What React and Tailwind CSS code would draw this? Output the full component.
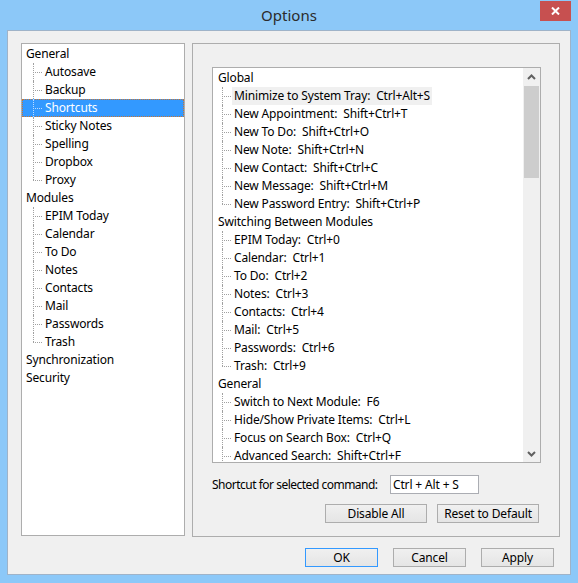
import React from "react";

const tree = [
  { label: "General", children: ["Autosave", "Backup", "Shortcuts", "Sticky Notes", "Spelling", "Dropbox", "Proxy"] },
  { label: "Modules", children: ["EPIM Today", "Calendar", "To Do", "Notes", "Contacts", "Mail", "Passwords", "Trash"] },
  { label: "Synchronization", children: [] },
  { label: "Security", children: [] },
];

const groups = [
  {
    label: "Global",
    items: [
      ["Minimize to System Tray", "Ctrl+Alt+S"],
      ["New Appointment", "Shift+Ctrl+T"],
      ["New To Do", "Shift+Ctrl+O"],
      ["New Note", "Shift+Ctrl+N"],
      ["New Contact", "Shift+Ctrl+C"],
      ["New Message", "Shift+Ctrl+M"],
      ["New Password Entry", "Shift+Ctrl+P"],
    ],
  },
  {
    label: "Switching Between Modules",
    items: [
      ["EPIM Today", "Ctrl+0"],
      ["Calendar", "Ctrl+1"],
      ["To Do", "Ctrl+2"],
      ["Notes", "Ctrl+3"],
      ["Contacts", "Ctrl+4"],
      ["Mail", "Ctrl+5"],
      ["Passwords", "Ctrl+6"],
      ["Trash", "Ctrl+9"],
    ],
  },
  {
    label: "General",
    items: [
      ["Switch to Next Module", "F6"],
      ["Hide/Show Private Items", "Ctrl+L"],
      ["Focus on Search Box", "Ctrl+Q"],
      ["Advanced Search", "Shift+Ctrl+F"],
    ],
    open: true,
  },
];

function Conn({ last, w, light }) {
  const c = light ? "border-[#bcdcff]" : "border-[#a0a0a0]";
  return (
    <div className={`relative shrink-0 h-full ${w}`}>
      <span className={`absolute left-0 top-0 border-l border-dotted ${c} ${last ? "h-[9px]" : "h-full"}`} />
      <span className={`absolute left-0 top-[9px] w-full border-t border-dotted ${c}`} />
    </div>
  );
}

function Btn({ children, w, def }) {
  return (
    <div
      className={`${w} h-[19px] flex items-center justify-center border ${
        def ? "border-[#3399ff]" : "border-[#adadad]"
      } bg-gradient-to-b from-[#f0f0f0] to-[#e5e5e5] leading-none`}
    >
      {children}
    </div>
  );
}

function Chevron({ down }) {
  return (
    <svg width="9" height="6" viewBox="0 0 9 6">
      <polyline
        points={down ? "1,1 4.5,4.5 8,1" : "1,5 4.5,1.5 8,5"}
        fill="none"
        stroke="#606060"
        strokeWidth="2"
      />
    </svg>
  );
}

export default function App() {
  return (
    <div className="w-[578px] h-[583px] bg-[#8cc8f8] flex flex-col font-['Noto_Sans',sans-serif] text-[12px] tracking-[-0.15px] text-black">
      <div className="h-[30px] relative flex items-center justify-center shrink-0">
        <span className="text-[15px] tracking-normal text-[#2b2b2b] leading-none">Options</span>
        <div className="absolute right-[7px] top-[1px] w-[31px] h-[20px] bg-[#c75050] flex items-center justify-center">
          <svg width="9" height="8" viewBox="0 0 9 8">
            <path d="M1 0.5 L8 7.5 M8 0.5 L1 7.5" stroke="white" strokeWidth="2" />
          </svg>
        </div>
      </div>

      <div className="mx-[7px] mb-[8px] flex-1 border border-[#9fb3c8] bg-[#f0f0f0] flex flex-col">
        <div className="flex pt-[12px] pl-[13px] gap-[7px]">
          {/* Tree */}
          <div className="w-[164px] h-[493px] border border-[#adadad] bg-white pt-[1px] flex flex-col">
            {tree.map((g) => (
              <React.Fragment key={g.label}>
                <div className="h-[18px] leading-[18px] pl-[4px] whitespace-nowrap">{g.label}</div>
                {g.children.map((c, i) => {
                  const sel = c === "Shortcuts";
                  return (
                    <div
                      key={c}
                      className={`h-[18px] flex items-stretch pl-[11px] ${
                        sel
                          ? "bg-[#3399ff] text-white outline outline-1 outline-dotted outline-[#c87533] -outline-offset-1"
                          : ""
                      }`}
                    >
                      <Conn w="w-[9px]" last={i === g.children.length - 1} light={sel} />
                      <span className="ml-[3px] leading-[18px] whitespace-nowrap">{c}</span>
                    </div>
                  );
                })}
              </React.Fragment>
            ))}
          </div>

          {/* Right panel */}
          <div className="w-[368px] h-[494px] border border-[#adadad] flex flex-col pt-[23px] pl-[19px]">
            <div className="w-[329px] h-[396px] border border-[#adadad] bg-white flex">
              <div className="flex-1 overflow-hidden flex flex-col pt-[1px]">
                {groups.map((g) => (
                  <React.Fragment key={g.label}>
                    <div className="h-[18px] shrink-0 leading-[18px] pl-[5px] whitespace-nowrap">{g.label}</div>
                    {g.items.map(([a, b], i) => {
                      const hl = i === 0 && g.label === "Global";
                      return (
                        <div key={a} className="h-[18px] shrink-0 flex items-stretch pl-[9px]">
                          <Conn w="w-[9px]" last={!g.open && i === g.items.length - 1} />
                          <span
                            className={`ml-[1px] px-[2px] leading-[18px] whitespace-pre ${hl ? "bg-[#f0f0f0]" : ""}`}
                          >
                            {`${a}:  ${b}`}
                          </span>
                        </div>
                      );
                    })}
                  </React.Fragment>
                ))}
              </div>
              <div className="w-[17px] shrink-0 bg-[#f0f0f0] flex flex-col">
                <div className="h-[17px] flex items-center justify-center">
                  <Chevron />
                </div>
                <div className="mt-[1px] mx-[1px] h-[92px] bg-[#cdcdcd]" />
                <div className="flex-1" />
                <div className="h-[17px] flex items-center justify-center">
                  <Chevron down />
                </div>
              </div>
            </div>

            <div className="mt-[12px] flex items-center">
              <div className="w-[178px] shrink-0">
                <span className="whitespace-nowrap tracking-[-0.5px]">Shortcut for selected command:</span>
              </div>
              <div className="w-[89px] h-[19px] border border-[#abadb3] bg-white pl-[2px] flex items-center leading-none whitespace-pre">
                Ctrl + Alt + S
              </div>
            </div>

            <div className="mt-[10px] flex justify-end gap-[10px] pr-[20px]">
              <Btn w="w-[102px]">Disable All</Btn>
              <Btn w="w-[102px]">Reset to Default</Btn>
            </div>
          </div>
        </div>

        <div className="mt-[11px] flex justify-end gap-[15px] pr-[16px]">
          <Btn w="w-[73px]" def>
            OK
          </Btn>
          <Btn w="w-[73px]">Cancel</Btn>
          <Btn w="w-[73px]">Apply</Btn>
        </div>
      </div>
    </div>
  );
}
